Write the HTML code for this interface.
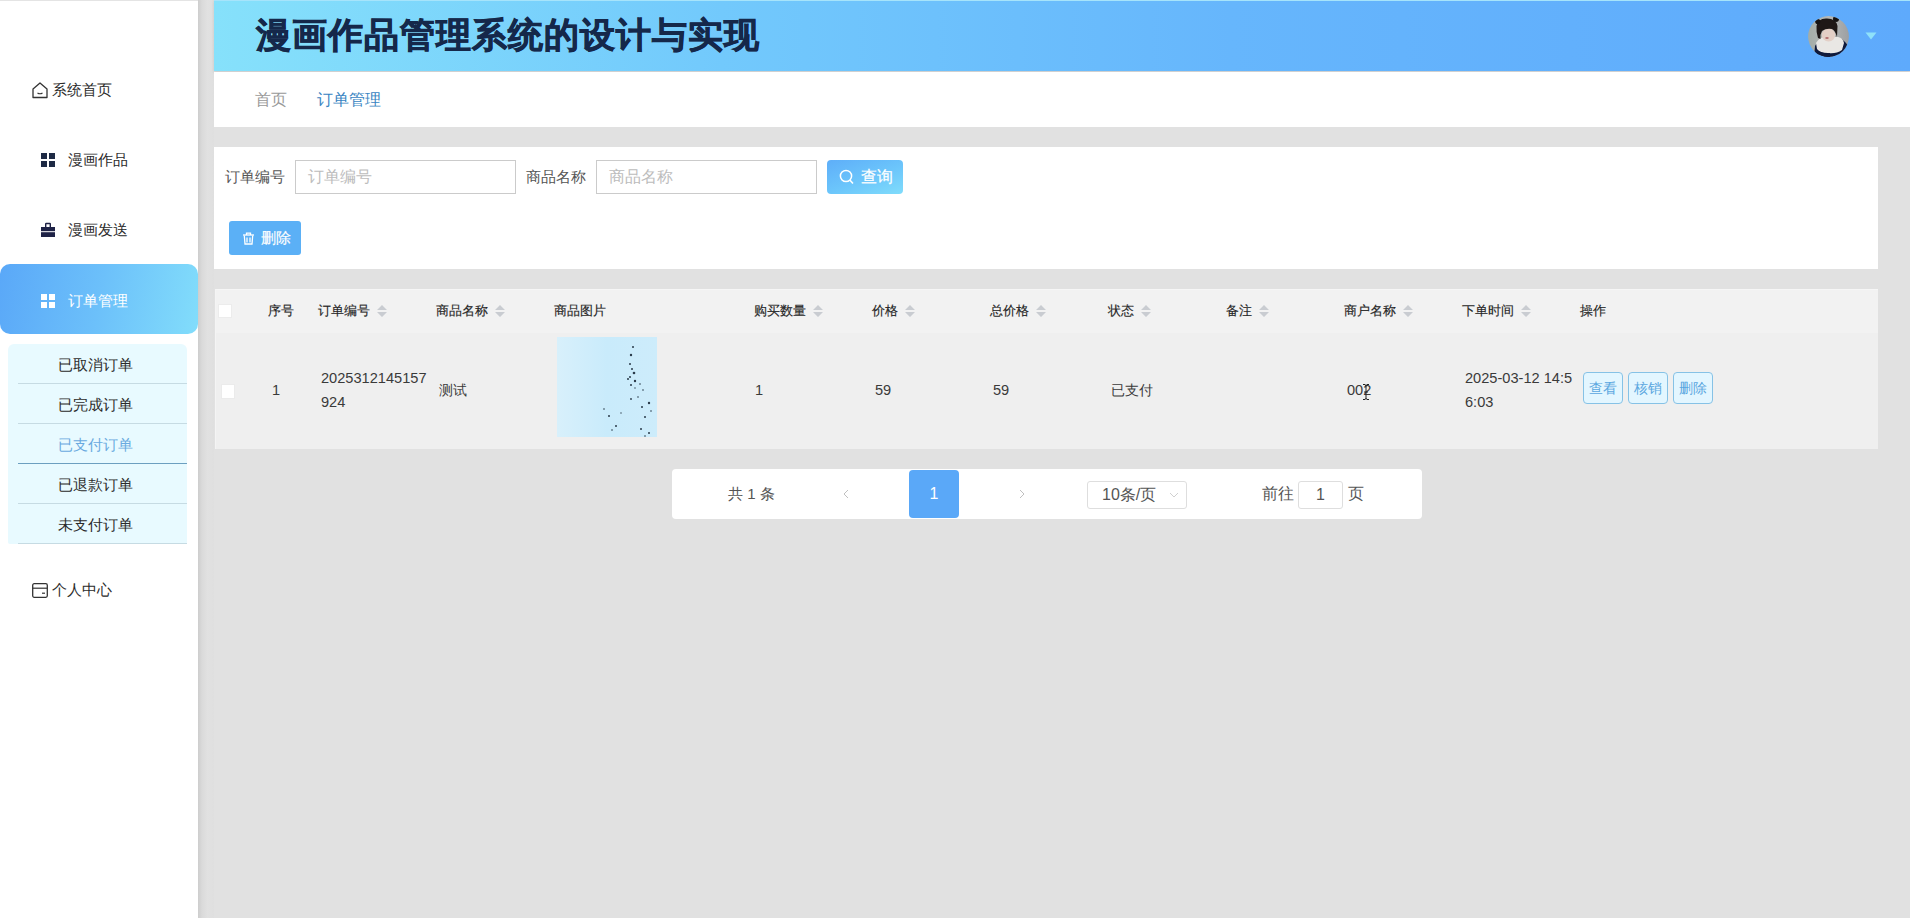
<!DOCTYPE html>
<html><head><meta charset="utf-8">
<style>
*{margin:0;padding:0;box-sizing:border-box;}
html,body{width:1910px;height:918px;overflow:hidden;}
body{background:#e1e1e1;font-family:"Liberation Sans",sans-serif;color:#333;position:relative;}
.abs{position:absolute;}
svg{position:absolute;overflow:visible;}
#topline{left:0;top:0;width:1910px;height:1px;background:#e4e4e4;}
#side{left:0;top:1px;width:198px;height:917px;background:#fff;}
#sideshadow{left:198px;top:0;width:16px;height:918px;background:linear-gradient(90deg,#cdcdcd,#dadada 25%,#e1e1e1 60%,#dfdfdf);}
.mi{position:absolute;font-size:15px;color:#2b2b2b;white-space:nowrap;line-height:20px;}
#active{left:0;top:264px;width:198px;height:70px;border-radius:10px;background:linear-gradient(100deg,#5aa8f8 0%,#6cc0fa 50%,#82ddfb 100%);}
#sub{left:8px;top:344px;width:179px;height:200px;background:#e8faff;border-radius:6px 6px 2px 2px;}
.si{position:absolute;left:10px;width:169px;height:40px;border-bottom:1px solid #c6dbe3;font-size:15px;line-height:41px;padding-left:40px;color:#2b2b2b;white-space:nowrap;}
#header{left:214px;top:0px;width:1696px;height:71px;border-top:1px solid #a6e4fb;background:linear-gradient(90deg,#86e1fb 0%,#72c9fc 30%,#66b6fc 60%,#5eaafc 100%);box-shadow:0 1px 3px rgba(0,0,0,0.12);}
#title{left:256px;top:12px;font-size:35px;letter-spacing:1px;font-weight:bold;-webkit-text-stroke:0.7px #15284a;color:#15284a;line-height:46px;white-space:nowrap;}
#crumb{left:214px;top:72px;width:1696px;height:55px;background:#fff;}
.card{background:#fff;}
.lbl{position:absolute;font-size:15px;color:#555;line-height:20px;white-space:nowrap;}
.inp{position:absolute;height:34px;border:1px solid #cbcbcb;background:#fff;font-size:16px;color:#bcbcbc;line-height:32px;padding-left:12px;white-space:nowrap;}
.th{position:absolute;top:301px;font-size:13px;font-weight:normal;-webkit-text-stroke:0.15px #262626;color:#262626;line-height:20px;white-space:nowrap;}
.td{position:absolute;font-size:14.6px;color:#3a3a3a;line-height:24px;white-space:nowrap;}
.btn3{position:absolute;top:372px;width:40px;height:32px;border:1px solid #86c2e6;border-radius:4px;background:#e3f6ff;color:#5aa6e0;font-size:14px;line-height:30px;text-align:center;}
</style></head><body>
<div id="topline" class="abs"></div>
<div id="side" class="abs"></div>
<div id="sideshadow" class="abs"></div>

<div id="header" class="abs"></div>
<div id="title" class="abs">漫画作品管理系统的设计与实现</div>
<!-- avatar -->
<svg style="left:1808px;top:16px;filter:blur(0.4px);" width="41" height="41" viewBox="0 0 41 41">
  <defs><clipPath id="cp"><circle cx="20.5" cy="20.5" r="20.4"/></clipPath>
  <linearGradient id="bg" x1="0" y1="0" x2="1" y2="0"><stop offset="0" stop-color="#a3aca6"/><stop offset="0.5" stop-color="#b6b9b8"/><stop offset="1" stop-color="#9c9fa2"/></linearGradient></defs>
  <g clip-path="url(#cp)">
    <rect width="41" height="41" fill="url(#bg)"/>
    <path d="M6 41 L7 30 Q10 24 16 22 L30 22 Q37 24 40 30 L41 41 Z" fill="#0f1a3c"/>
    <path d="M8 27 Q12 20 18 21 L30 21 Q35 22 36 27 L34 34 Q28 38 20 37 Q12 37 9 33 Z" fill="#e9e7e4"/>
    <path d="M8 34 Q14 38 22 37 L22 41 L6 41 Z" fill="#0f1a3c"/>
    <ellipse cx="20.5" cy="19" rx="6.8" ry="6.5" fill="#e3cfc6"/>
    <path d="M8.5 10 Q10 2 19 2.5 Q28 2.5 29.5 10 L29 21 Q27 14 24 13 Q18 12 14 15 Q12 18 12.5 23 L10 22 Q8 16 8.5 10 Z" fill="#1e1817"/>
    <circle cx="9.8" cy="5.5" r="2.6" fill="#141212"/>
    <circle cx="28" cy="3" r="3" fill="#141212"/>
    <ellipse cx="19" cy="22" rx="1.8" ry="0.9" fill="#b27070"/>
  </g>
</svg>
<svg style="left:1865px;top:32px;" width="12" height="8" viewBox="0 0 12 8"><path d="M0.5 0.5 L11.5 0.5 L6 7.5 Z" fill="#8fe1f9"/></svg>

<div id="crumb" class="abs"></div>
<div class="abs" style="left:255px;top:89px;font-size:16px;color:#999;line-height:22px;">首页</div>
<div class="abs" style="left:317px;top:89px;font-size:16px;color:#3884c2;line-height:22px;">订单管理</div>

<!-- sidebar menu -->
<svg style="left:32px;top:82px;" width="16" height="17" viewBox="0 0 16 17"><path d="M1 7 L8 1 L15 7 L15 15.5 L1 15.5 Z" fill="none" stroke="#333" stroke-width="1.3" stroke-linejoin="round"/><path d="M5.5 11 Q8 12.5 10.5 11" fill="none" stroke="#333" stroke-width="1.2"/></svg>
<div class="mi" style="left:52px;top:80px;">系统首页</div>
<svg style="left:41px;top:153px;" width="14" height="14" viewBox="0 0 14 14" fill="#1e2a45"><rect x="0" y="0" width="6" height="6"/><rect x="8" y="0" width="6" height="6"/><rect x="0" y="8" width="6" height="6"/><rect x="8" y="8" width="6" height="6"/></svg>
<div class="mi" style="left:68px;top:150px;">漫画作品</div>
<svg style="left:41px;top:222px;" width="14" height="15" viewBox="0 0 14 15" fill="#1e2246"><path d="M4 5 L4 2 Q4 0.8 5.2 0.8 L8.8 0.8 Q10 0.8 10 2 L10 5 L8.6 5 L8.6 2.2 L5.4 2.2 L5.4 5 Z"/><rect x="0" y="5" width="14" height="4.2"/><rect x="0" y="10.2" width="14" height="4.8"/></svg>
<div class="mi" style="left:68px;top:220px;">漫画发送</div>
<div id="active" class="abs"></div>
<svg style="left:41px;top:294px;" width="14" height="14" viewBox="0 0 14 14" fill="#fff"><rect x="0" y="0" width="6" height="6"/><rect x="8" y="0" width="6" height="6"/><rect x="0" y="8" width="6" height="6"/><rect x="8" y="8" width="6" height="6"/></svg>
<div class="mi" style="left:68px;top:291px;color:#fff;">订单管理</div>
<div id="sub" class="abs">
  <div class="si" style="top:0;">已取消订单</div>
  <div class="si" style="top:40px;">已完成订单</div>
  <div class="si" style="top:80px;color:#6aaae0;border-bottom-color:#6c9fc0;">已支付订单</div>
  <div class="si" style="top:120px;">已退款订单</div>
  <div class="si" style="top:160px;">未支付订单</div>
</div>
<svg style="left:32px;top:583px;" width="16" height="15" viewBox="0 0 16 15"><rect x="0.7" y="0.7" width="14.6" height="13.6" rx="1.5" fill="none" stroke="#333" stroke-width="1.3"/><line x1="0.7" y1="5.2" x2="15.3" y2="5.2" stroke="#333" stroke-width="1.2"/><line x1="10" y1="10.2" x2="13" y2="10.2" stroke="#333" stroke-width="1.2"/></svg>
<div class="mi" style="left:52px;top:580px;">个人中心</div>

<!-- search card -->
<div class="abs card" style="left:214px;top:147px;width:1664px;height:122px;"></div>
<div class="lbl" style="left:225px;top:167px;">订单编号</div>
<div class="inp" style="left:295px;top:160px;width:221px;">订单编号</div>
<div class="lbl" style="left:526px;top:167px;">商品名称</div>
<div class="inp" style="left:596px;top:160px;width:221px;">商品名称</div>
<div class="abs" style="left:827px;top:160px;width:76px;height:34px;border-radius:4px;background:linear-gradient(160deg,#5eaef9 0%,#6cc6fb 55%,#80dcfb 100%);"></div>
<svg style="left:839px;top:169px;" width="16" height="16" viewBox="0 0 16 16"><circle cx="7" cy="7" r="5.6" fill="none" stroke="#fff" stroke-width="1.5"/><line x1="10.8" y1="11" x2="14" y2="14.5" stroke="#fff" stroke-width="1.6"/></svg>
<div class="abs" style="left:861px;top:166px;font-size:16px;color:#fff;line-height:22px;-webkit-text-stroke:0.2px #fff;">查询</div>
<div class="abs" style="left:229px;top:221px;width:72px;height:34px;border-radius:3px;background:#5bb0f6;"></div>
<svg style="left:242px;top:232px;" width="13" height="13" viewBox="0 0 13 13" fill="none" stroke="#fff" stroke-width="1.3"><path d="M1 3 L12 3"/><path d="M4.5 3 L4.5 1.2 L8.5 1.2 L8.5 3"/><path d="M2.3 3.5 L3 12 L10 12 L10.7 3.5"/><path d="M5 5.5 L5 10.5 M8 5.5 L8 10.5"/></svg>
<div class="abs" style="left:261px;top:227px;font-size:15px;color:#fff;line-height:22px;-webkit-text-stroke:0.2px #fff;">删除</div>

<!-- table -->
<div class="abs" style="left:215px;top:289px;width:1663px;height:160px;background:#efefef;border-top:1px solid #f6f6f6;border-left:1px solid #f4f4f4;"></div>
<div class="abs" style="left:216px;top:290px;width:1662px;height:43px;background:#f2f2f2;"></div>
<div class="abs" style="left:218px;top:304px;width:14px;height:14px;background:#fff;border:1px solid #ececec;"></div>
<div class="th" style="left:268px;">序号</div>
<div class="th" style="left:318px;">订单编号</div>
<div class="th" style="left:436px;">商品名称</div>
<div class="th" style="left:554px;">商品图片</div>
<div class="th" style="left:754px;">购买数量</div>
<div class="th" style="left:872px;">价格</div>
<div class="th" style="left:990px;">总价格</div>
<div class="th" style="left:1108px;">状态</div>
<div class="th" style="left:1226px;">备注</div>
<div class="th" style="left:1344px;">商户名称</div>
<div class="th" style="left:1462px;">下单时间</div>
<div class="th" style="left:1580px;">操作</div>
<svg style="left:0;top:0;" width="1910" height="918" viewBox="0 0 1910 918" fill="#c9ccd1">
  <g id="s"><path d="M377 310 L382 305 L387 310 Z M377 312 L387 312 L382 317 Z"/></g>
  <path transform="translate(118 0)" d="M377 310 L382 305 L387 310 Z M377 312 L387 312 L382 317 Z"/>
  <path transform="translate(436 0)" d="M377 310 L382 305 L387 310 Z M377 312 L387 312 L382 317 Z"/>
  <path transform="translate(528 0)" d="M377 310 L382 305 L387 310 Z M377 312 L387 312 L382 317 Z"/>
  <path transform="translate(659 0)" d="M377 310 L382 305 L387 310 Z M377 312 L387 312 L382 317 Z"/>
  <path transform="translate(764 0)" d="M377 310 L382 305 L387 310 Z M377 312 L387 312 L382 317 Z"/>
  <path transform="translate(882 0)" d="M377 310 L382 305 L387 310 Z M377 312 L387 312 L382 317 Z"/>
  <path transform="translate(1026 0)" d="M377 310 L382 305 L387 310 Z M377 312 L387 312 L382 317 Z"/>
  <path transform="translate(1144 0)" d="M377 310 L382 305 L387 310 Z M377 312 L387 312 L382 317 Z"/>
</svg>

<div class="abs" style="left:221px;top:384px;width:14px;height:15px;background:#fff;border:1px solid #ebebeb;"></div>
<div class="td" style="left:272px;top:378px;">1</div>
<div class="td" style="left:321px;top:366px;">2025312145157<br>924</div>
<div class="td" style="left:439px;top:378px;font-size:14px;">测试</div>
<div class="abs" style="left:557px;top:337px;width:100px;height:100px;background:linear-gradient(90deg,#d8f0fb,#c9ebfb 50%,#cdecfb);"></div>
<svg style="left:557px;top:337px;" width="100" height="100" viewBox="0 0 100 100" fill="#2a3b4a">
  <circle cx="76" cy="10" r="1"/><circle cx="74" cy="18" r="1.2"/><circle cx="73" cy="27" r="1"/><circle cx="75" cy="32" r="1"/><circle cx="77" cy="36" r="1.3"/><circle cx="73" cy="40" r="1"/><circle cx="71" cy="42" r="1"/><circle cx="78" cy="44" r="1.2"/><circle cx="74" cy="48" r="1"/><circle cx="83" cy="47" r="0.8"/><circle cx="86" cy="53" r="0.8"/><circle cx="81" cy="60" r="0.8"/><circle cx="74" cy="62" r="0.9"/><circle cx="92" cy="66" r="1.2"/><circle cx="85" cy="70" r="1"/><circle cx="47" cy="72" r="0.8"/><circle cx="52" cy="79" r="1"/><circle cx="64" cy="76" r="0.7"/><circle cx="88" cy="80" r="1"/><circle cx="59" cy="89" r="1"/><circle cx="55" cy="93" r="0.8"/><circle cx="84" cy="92" r="1"/><circle cx="92" cy="96" r="1"/><circle cx="88" cy="99" r="0.8"/><circle cx="94" cy="74" r="0.8"/><circle cx="78" cy="51" r="0.7"/>
</svg>
<div class="td" style="left:755px;top:378px;">1</div>
<div class="td" style="left:875px;top:378px;">59</div>
<div class="td" style="left:993px;top:378px;">59</div>
<div class="td" style="left:1111px;top:378px;font-size:14px;">已支付</div>
<div class="td" style="left:1347px;top:378px;">002</div>
<svg style="left:1362px;top:384px;" width="8" height="16" viewBox="0 0 8 16" fill="none" stroke="#222" stroke-width="1"><path d="M1 0.5 L3 0.5 Q4 1 4 2 L4 14 Q4 15 3 15.5 L1 15.5 M7 0.5 L5 0.5 Q4 1 4 2 M4 14 Q4 15 5 15.5 L7 15.5 M2 8 L6 8"/></svg>
<div class="td" style="left:1465px;top:366px;">2025-03-12 14:5<br>6:03</div>
<div class="btn3" style="left:1583px;">查看</div>
<div class="btn3" style="left:1628px;">核销</div>
<div class="btn3" style="left:1673px;">删除</div>

<!-- pagination -->
<div class="abs" style="left:672px;top:469px;width:750px;height:50px;background:#fff;border-radius:4px;"></div>
<div class="abs" style="left:728px;top:484px;font-size:15px;color:#555;line-height:20px;">共 1 条</div>
<svg style="left:842px;top:489px;" width="8" height="10" viewBox="0 0 8 10"><path d="M6 1 L2 5 L6 9" fill="none" stroke="#c0c0c0" stroke-width="1"/></svg>
<div class="abs" style="left:909px;top:470px;width:50px;height:48px;background:#5aa8f8;border-radius:4px;color:#fff;font-size:16px;line-height:48px;text-align:center;">1</div>
<svg style="left:1018px;top:489px;" width="8" height="10" viewBox="0 0 8 10"><path d="M2 1 L6 5 L2 9" fill="none" stroke="#c0c0c0" stroke-width="1"/></svg>
<div class="abs" style="left:1087px;top:481px;width:100px;height:28px;border:1px solid #dedede;border-radius:3px;font-size:16px;color:#555;line-height:26px;padding-left:14px;">10条/页</div>
<svg style="left:1169px;top:491px;" width="10" height="8" viewBox="0 0 10 8"><path d="M1 2 L5 6 L9 2" fill="none" stroke="#d0d0d0" stroke-width="1"/></svg>
<div class="abs" style="left:1262px;top:484px;font-size:16px;color:#555;line-height:20px;">前往</div>
<div class="abs" style="left:1298px;top:481px;width:45px;height:28px;border:1px solid #dedede;border-radius:3px;font-size:16px;color:#555;line-height:26px;text-align:center;">1</div>
<div class="abs" style="left:1348px;top:484px;font-size:16px;color:#555;line-height:20px;">页</div>
</body></html>
